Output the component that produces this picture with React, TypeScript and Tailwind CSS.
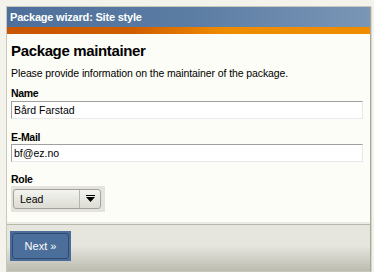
import React from "react";

export default function App() {
  const font = { fontFamily: '"Liberation Sans", Arial, sans-serif' };
  return (
    <div className="w-[374px] h-[272px] bg-[#f4f3eb] pt-[6px] pl-[6px] overflow-hidden" style={font}>
      <div className="w-[365px] h-[266px] flex flex-col border border-[#c9c8bd] border-r-[#a9a89c] shadow-[1px_1px_0_#d6d5cb]">
        <div className="h-[20px] bg-gradient-to-r from-[#4d6f9a] via-[#5b7ca3] to-[#7a96b6] text-white font-bold text-[11px] tracking-[-0.2px] leading-[20px] pl-[3px]">
          Package wizard: Site style
        </div>
        <div className="h-[7px] [background:linear-gradient(to_right,#c95500_0%,#d05e00_35%,#f08c00_60%,#f08c00_100%)]" />
        <div className="h-[188px] bg-[#fdfdf7] px-[4px] pt-[7px] flex flex-col">
          <div className="text-[15px] font-bold tracking-[-0.35px] leading-[20px] text-black">Package maintainer</div>
          <div className="text-[10.5px] tracking-[-0.1px] leading-[13px] mt-[6px] text-black">Please provide information on the maintainer of the package.</div>
          <div className="text-[10.5px] font-bold tracking-[-0.3px] leading-[13px] mt-[7px] text-black">Name</div>
          <div className="mt-[1px] w-[352px] h-[18px] bg-white border border-[#a0a0a0] border-r-[#e8e8e8] border-b-[#e8e8e8] text-[10.5px] leading-[16px] pl-[2px]">Bård Farstad</div>
          <div className="text-[10.5px] font-bold tracking-[-0.3px] leading-[13px] mt-[12px] text-black">E-Mail</div>
          <div className="w-[352px] h-[18px] bg-white border border-[#a0a0a0] border-r-[#e8e8e8] border-b-[#e8e8e8] text-[10.5px] leading-[16px] pl-[2px]">bf@ez.no</div>
          <div className="text-[10.5px] font-bold tracking-[-0.3px] leading-[13px] mt-[11px] text-black">Role</div>
          <div className="w-[94px] h-[26px] bg-[#e4e3dd] p-[3px_4px_3px_2px]">
            <div className="h-[20px] w-[88px] rounded-[3px] border border-[#a2a29a] bg-gradient-to-b from-[#f4f4f0] to-[#dcdcd4] flex items-center">
              <div className="w-[65px] pl-[6px] text-[10.5px] leading-[18px]">Lead</div>
              <div className="w-px h-[18px] bg-[#b5b5ac]" />
              <div className="flex-1 flex justify-center">
                <svg width="11" height="8" viewBox="0 0 11 8">
                  <rect x="1" y="0" width="9" height="1" fill="#000" />
                  <polygon points="1,2 10,2 5.5,7" fill="#000" />
                </svg>
              </div>
            </div>
          </div>
        </div>
        <div className="h-[2px] bg-[#ecebe3]" />
        <div className="h-[1px] bg-[#b8b7ab]" />
        <div className="flex-1 [background:linear-gradient(to_bottom,#e6e5de_0%,#e6e5de_45%,#bdbcb0_100%)] pl-[3px] pt-[6px]">
          <div className="w-[61px] h-[30px] bg-[#4a6c98] p-[2px]">
            <div className="w-full h-full rounded-[3px] border border-[#2e4a70] bg-[#4b6e9a] flex items-center justify-center text-white text-[11px]">
              Next »
            </div>
          </div>
        </div>
      </div>
    </div>
  );
}
